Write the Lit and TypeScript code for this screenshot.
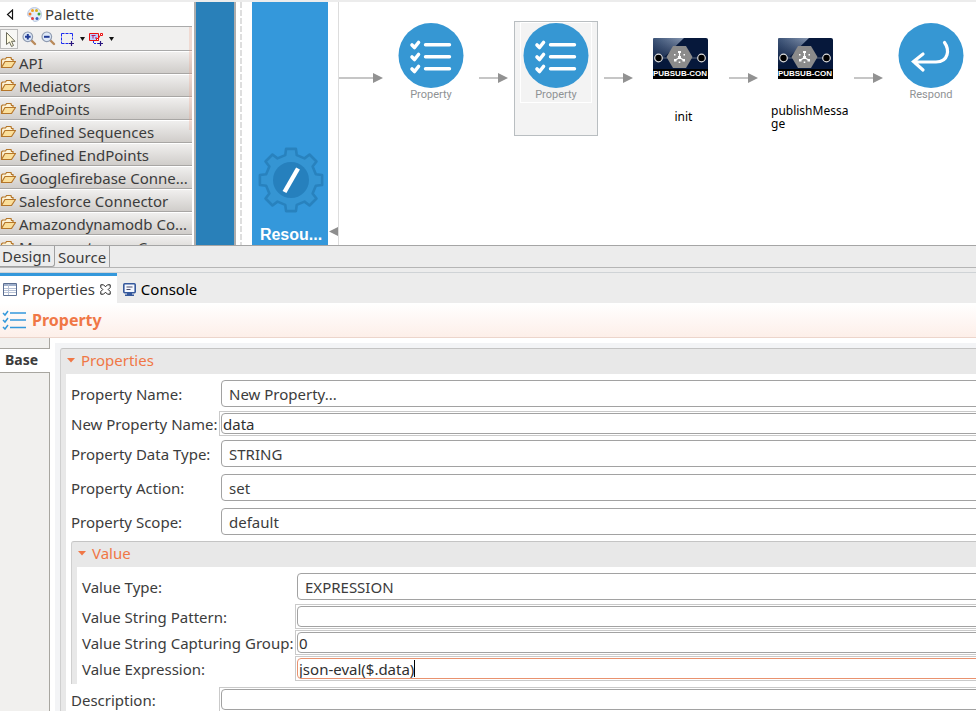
import { LitElement, html, svg, css, nothing } from "lit";
import { customElement, property } from "lit/decorators.js";
import { styleMap } from "lit/directives/style-map.js";

const UI = css`
  :host {
    font-family: "Noto Sans", "Open Sans", sans-serif;
    font-size: 15px;
    line-height: 20px;
    color: #3c3c3c;
  }
  * {
    box-sizing: border-box;
  }
  svg {
    display: block;
    flex: none;
  }
  button {
    font: inherit;
    color: inherit;
    background: none;
    border: 0;
    padding: 0;
    margin: 0;
    text-align: left;
  }
`;

const folderIcon = html`<svg width="16" height="13" viewBox="0 0 16 13">
  <path d="M1.500 11.500V4l1-1h3l1-1.500h4.500l.5 2h1.500v2" fill="#fdf3d6" stroke="#b5762a" stroke-width="1.200" />
  <path d="M1.500 11.500l3.500-6h10.500l-4 6z" fill="#fbdf9a" stroke="#b5762a" stroke-width="1.200" stroke-linejoin="round" />
</svg>`;

const zoomIcon = (plus: boolean) => html`<svg width="15" height="15" viewBox="0 0 15 15">
  <path d="M9 9l4 4" stroke="#b98a5a" stroke-width="2.400" stroke-linecap="round" />
  <circle cx="5.800" cy="5.800" r="4.800" fill="#dfe9f8" stroke="#8f9bb0" stroke-width="1.200" />
  <path d=${plus ? "M3 5.800h5.600M5.800 3v5.600" : "M3 5.800h5.600"} stroke="#223c96" stroke-width="2" />
</svg>`;

const checklist = svg`
  <g fill="none" stroke-linecap="round" stroke-linejoin="round">
    <path d="M14 22.500l2.500 2.500 4-5M14 34.500l2.500 2.500 4-5M14 46.500l2.500 2.500 4-5" stroke-width="3.600" />
    <path d="M27.500 22.300h24M27.500 34.300h24M27.500 46.300h24" stroke-width="3.400" />
  </g>`;

/* Palette drawer with its tool strip. */
@customElement("tool-palette")
class ToolPalette extends LitElement {
  static styles = [
    UI,
    css`
      :host {
        display: flex;
        flex-direction: column;
        position: relative;
        overflow: hidden;
        background: #fff;
      }
      .head {
        flex: none;
        display: flex;
        align-items: center;
        height: 25px;
        padding-left: 6px;
        border-bottom: 1px solid #aaa;
      }
      .head .dots {
        margin: 0 3px 0 13px;
      }
      .tools {
        flex: none;
        display: flex;
        align-items: center;
        height: 24px;
        background: #f1f0ef;
        border-bottom: 1px solid #aaa;
      }
      .pick {
        width: 18px;
        height: 20px;
        padding: 1px 0 0 4px;
        border: 1px solid #bbb;
        background: #f7f7f5;
      }
      .zoom,
      .menu {
        margin-left: 4px;
      }
      .drawer {
        flex: none;
        display: flex;
        align-items: center;
        gap: 3px;
        width: 100%;
        height: 23px;
        border-top: 1px solid #fff;
        border-bottom: 1px solid #a8a6a4;
        background: linear-gradient(#f0efee, #d0cdca);
      }
      .name {
        white-space: nowrap;
      }
      .glow {
        position: absolute;
        top: 25px;
        right: 0;
        width: 3px;
        height: 103px;
        background: rgba(240, 150, 125, 0.25);
      }
    `,
  ];

  drawers = [
    "API",
    "Mediators",
    "EndPoints",
    "Defined Sequences",
    "Defined EndPoints",
    "Googlefirebase Conne...",
    "Salesforce Connector",
    "Amazondynamodb Co...",
    "Measurestorage Conne...",
  ];

  render() {
    const down = html`<svg width="5" height="4" viewBox="0 0 5 4"><path d="M0 0h5L2.500 4z" fill="#111" /></svg>`;
    return html`
      <div class="head">
        <svg width="8" height="11" viewBox="0 0 8 11"><path d="M6.500 1v9L1.500 5.500z" fill="#fff" stroke="#111" stroke-width="1.200" /></svg>
        <svg class="dots" width="15" height="15" viewBox="0 0 15 15">
          <path d="M7.500.6a6.900 6.900 0 0 1 6.900 6.900c0 4-3 6.900-6.900 6.900-2 0-1-2-2.500-3.500S.6 10 .6 7.500A6.900 6.900 0 0 1 7.500.6z" fill="#e6edf8" stroke="#b3c3dd" />
          <circle cx="5.500" cy="3.500" r="1.500" fill="#f0a020" />
          <circle cx="9.500" cy="3.500" r="1.500" fill="#d8b018" />
          <circle cx="12" cy="7" r="1.500" fill="#3fa535" />
          <circle cx="3" cy="7" r="1.500" fill="#ef7d22" />
          <circle cx="5.500" cy="11.500" r="1.500" fill="#e04040" />
          <circle cx="10" cy="11.500" r="1.500" fill="#3a62c0" />
        </svg>
        <span>Palette</span>
      </div>
      <div class="tools">
        <button class="pick" aria-label="Select">
          <svg width="11" height="17" viewBox="0 0 11 17"><path d="M1.500 1.500v12l3-2.500 2 4.500 2-1-2-4.200h3.500z" fill="#fffbe0" stroke="#6b6b5a" /></svg>
        </button>
        <button class="zoom" aria-label="Zoom in">${zoomIcon(true)}</button>
        <button class="zoom" aria-label="Zoom out">${zoomIcon(false)}</button>
        <button class="menu" aria-label="Marquee">
          <svg width="16" height="16" viewBox="0 0 16 16">
            <path d="M1.500 2.500h11M1.500 12.500h7M1.500 2.500v10M12.500 2.500v6" fill="none" stroke="#1a2af0" stroke-dasharray="3 1" />
            <path d="M9 12.500h5M11.500 10v5" stroke="#2a1680" stroke-width="1.200" />
          </svg>
        </button>
        <button class="menu" aria-label="Marquee options">${down}</button>
        <button class="menu" aria-label="Connection">
          <svg width="16" height="16" viewBox="0 0 16 16">
            <path d="M.5 2.500h9v7h-9z" fill="#bcd0ff" stroke="#e81010" />
            <path d="M2.500 4.500h4M4 4.500v3M6 7h2" stroke="#c01060" fill="none" />
            <path d="M9 8l2.500-4" stroke="#e81010" />
            <path d="M11.500 2.500h2v2h-2zM7.500 7.500h2v2h-2z" stroke="#e81010" fill="#fff" />
            <path d="M4.500 10v2.500h4.500" stroke="#1a2af0" fill="none" stroke-dasharray="2 1" />
            <path d="M9 12.500h5M11.500 10v5" stroke="#2a1680" stroke-width="1.200" />
          </svg>
        </button>
        <button class="menu" aria-label="Connection options">${down}</button>
      </div>
      ${this.drawers.map((d) => html`<button class="drawer">${folderIcon}<span class="name">${d}</span></button>`)}
      <div class="glow"></div>
    `;
  }
}

interface MediatorNode {
  x: number;
  kind: "property" | "respond" | "pubsub";
  label: string;
  selected?: boolean;
}

/* Free canvas with the mediation sequence. */
@customElement("flow-canvas")
class FlowCanvas extends LitElement {
  static styles = [
    UI,
    css`
      :host {
        display: block;
        position: relative;
        overflow: hidden;
        background: #fff;
        border-left: 1px solid #ddd;
      }
      .node,
      .arrow {
        position: absolute;
      }
      .node {
        top: 19px;
        width: 84px;
        height: 115px;
        padding-top: 1px;
        display: flex;
        flex-direction: column;
        align-items: center;
        border: 1px solid transparent;
      }
      .node.selected {
        background: #f3f3f3;
        border-color: #b9bec1;
        padding-top: 0;
      }
      .card {
        display: flex;
        flex-direction: column;
        align-items: center;
        width: 72px;
      }
      .selected .card {
        border: 1px solid #fff;
      }
      .caption {
        font: 11px/14px Roboto, sans-serif;
        color: #8f9294;
      }
      .pubsub {
        padding-top: 15px;
      }
      .title {
        align-self: flex-start;
        margin: 25px 0 0 7px;
        width: 80px;
        font-size: 12px;
        line-height: 13px;
        color: #000;
        overflow-wrap: anywhere;
      }
      .title.short {
        align-self: center;
        margin-top: 31px;
        width: auto;
      }
      .arrow {
        top: 71px;
      }
    `,
  ];

  nodes: MediatorNode[] = [
    { x: 50, kind: "property", label: "Property" },
    { x: 175, kind: "property", label: "Property", selected: true },
    { x: 299, kind: "pubsub", label: "init" },
    { x: 424, kind: "pubsub", label: "publishMessage" },
    { x: 550, kind: "respond", label: "Respond" },
  ];

  arrows = [
    { x: 0, w: 44 },
    { x: 140, w: 29 },
    { x: 265, w: 29 },
    { x: 390, w: 29 },
    { x: 515, w: 29 },
  ];

  badge(kind: string) {
    return html`<svg width="66" height="65" viewBox="0 0.5 66 65">
      <circle cx="33" cy="33" r="32.500" fill="#3697d3" />
      ${kind === "property"
        ? svg`<g stroke="#fff">${checklist}</g>`
        : svg`<path d="M46.500 20c5 7 4.500 19-8.500 19.500H16M25 31.500L15.500 39l9.500 8.500" fill="none" stroke="#fff" stroke-width="3.200" stroke-linecap="round" />`}
    </svg>`;
  }

  connector() {
    return html`<svg width="55" height="41" viewBox="0 0 55 41">
      <defs>
        <linearGradient id="sheen" x1="0" y1="0" x2="1" y2="0">
          <stop offset="0" stop-color="#3d5478" /><stop offset="1" stop-color="#8797b0" />
        </linearGradient>
        <linearGradient id="fade" x1="0" y1="0" x2="0" y2="1">
          <stop offset="0" stop-color="#06183b" stop-opacity="0" /><stop offset="1" stop-color="#06183b" />
        </linearGradient>
      </defs>
      <rect width="55" height="41" rx="2" fill="#06183b" />
      <path d="M1 0h30L3 27H0V1z" fill="url(#sheen)" />
      <path d="M0 0h32L3 28H0z" fill="url(#fade)" />
      <path d="M5 20h44" stroke="#5b6880" />
      <path d="M20 8h13l6.500 11L33 30H20l-6.500-11z" fill="#8b8b8b" />
      <path d="M26.500 14v5.500M26.500 19.500l-4 2.500M26.500 19.500l4 2.500" fill="none" stroke="#fff" stroke-width="1.200" />
      <g fill="#fff">
        <path d="M25 13h3v2h-3zM21 21h2.500v2.500H21zM29.500 21H32v2.500h-2.500z" />
        <path d="M21 16h1.500v1.500H21zM30.500 16H32v1.500h-1.500zM25.700 23.500h1.600V25h-1.600zM25 18h3v3h-3z" />
      </g>
      <circle cx="5.500" cy="20" r="3.800" fill="#000" stroke="#ddd" stroke-width="1.200" />
      <circle cx="48.500" cy="20" r="3.800" fill="#000" stroke="#ddd" stroke-width="1.200" />
      <path d="M0 31h55v10H0z" fill="#000" />
      <text x="27" y="38" text-anchor="middle" font-family="Liberation Sans, sans-serif" font-weight="700" font-size="8" fill="#fff">PUBSUB-CON</text>
    </svg>`;
  }

  render() {
    return html`
      ${this.arrows.map(
        (a) => html`<svg class="arrow" style=${styleMap({ left: `${a.x}px` })} width=${a.w} height="10">
          <path d=${`M0 5H${a.w - 9}`} stroke="#c6c6c6" stroke-width="2" />
          <path d=${`M${a.w - 10} 0L${a.w} 5L${a.w - 10} 10z`} fill="#929292" />
        </svg>`
      )}
      ${this.nodes.map((n) =>
        n.kind === "pubsub"
          ? html`<div class="node" style=${styleMap({ left: `${n.x}px` })}>
              <div class="pubsub">${this.connector()}</div>
              <div class="title ${n.label.length < 8 ? "short" : ""}">${n.label}</div>
            </div>`
          : html`<div class="node ${n.selected ? "selected" : ""}" style=${styleMap({ left: `${n.x}px` })}>
              <div class="card">${this.badge(n.kind)}<span class="caption">${n.label}</span></div>
            </div>`
      )}
    `;
  }
}

/* Titled group with a twistie. */
@customElement("form-section")
class FormSection extends LitElement {
  static styles = [
    UI,
    css`
      :host {
        display: block;
        padding-left: 5px;
        background: #e8e8e8;
        border-top: 1px solid #c4c4c4;
        border-left: 1px solid #cfcfcf;
        border-radius: 3px 0 0 0;
      }
      .title {
        display: flex;
        align-items: center;
        gap: 6px;
        height: 25px;
        padding-bottom: 3px;
        color: #f07746;
      }
      .body {
        background: #fff;
        padding: 2px 0 3px 5px;
      }
    `,
  ];
  @property() heading = "";

  render() {
    return html`
      <button class="title">
        <svg width="9" height="5" viewBox="0 0 9 5"><path d="M1 0h8L5 4.500z" fill="#f07746" /></svg>${this.heading}
      </button>
      <div class="body"><slot></slot></div>
    `;
  }
}

interface Field {
  id: string;
  label: string;
  value: string;
  combo?: boolean;
  active?: boolean;
}

@customElement("app-root")
class AppRoot extends LitElement {
  static styles = [
    UI,
    css`
      :host {
        display: flex;
        flex-direction: column;
        height: 100vh;
        overflow: hidden;
        background: #ececec;
      }
      .editor {
        flex: none;
        display: flex;
        height: 243px;
        margin-top: 2px;
        background: #fff;
      }
      tool-palette {
        width: 192px;
        margin-right: 2px;
      }
      .rail {
        width: 42px;
        background: #2980b9;
        border: solid #adadad;
        border-width: 0 2px;
      }
      .guide {
        width: 2px;
        margin: 0 10px 0 4px;
        background: repeating-linear-gradient(#dedede 0 6px, #fff 6px 8px);
      }
      .resource {
        width: 76px;
        padding-left: 2px;
        display: flex;
        flex-direction: column;
        justify-content: flex-end;
        align-items: center;
        gap: 12px;
        background: #3498db;
        color: #fff;
        font: bold 16px/20px "Liberation Sans", sans-serif;
      }
      .handle {
        width: 10px;
        display: flex;
        align-items: flex-end;
        justify-content: flex-end;
        padding-bottom: 9px;
      }
      flow-canvas {
        flex: 1;
      }
      .pages {
        flex: none;
        display: flex;
        height: 23px;
        border-top: 1px solid #a5a5a5;
        border-bottom: 1px solid #b5b5b5;
      }
      .page {
        height: 21px;
        padding: 0 3px;
        border-right: 1px solid #a0a0a0;
      }
      .page.on {
        padding-left: 2px;
        border-bottom: 1px solid #a0a0a0;
        border-radius: 0 0 3px 0;
      }
      .views {
        flex: none;
        display: flex;
        height: 31px;
        margin-top: 4px;
        border-top: 1px solid #cfd3d6;
      }
      .view {
        display: flex;
        align-items: center;
        gap: 5px;
        padding: 2px 6px 0;
        color: #000;
      }
      .view.on {
        padding: 0 6px 1px 3px;
        color: #3c3c3c;
        background: #fff;
        border-top: 3px solid #3498db;
      }
      .heading {
        flex: none;
        display: flex;
        align-items: center;
        gap: 5px;
        height: 35px;
        margin: 0;
        padding-left: 2px;
        font-size: 16px;
        color: #f07746;
        background: linear-gradient(#fff, #fdefe9);
        border-bottom: 1px solid #ecd5cb;
      }
      .sheet {
        flex: 1;
        min-height: 0;
        display: flex;
        overflow: hidden;
        background: #fff;
      }
      .side {
        flex: none;
        width: 50px;
        display: flex;
        flex-direction: column;
      }
      .cap,
      .rest {
        background: #f1f0ee;
        border-right: 1px solid #a8a6a0;
      }
      .cap {
        height: 11px;
        border-bottom: 1px solid #a8a6a0;
      }
      .rest {
        flex: 1;
        border-top: 1px solid #a8a6a0;
      }
      .tab {
        height: 23px;
        padding: 0 0 2px 5px;
        font-size: 14px;
        font-weight: 700;
      }
      .form {
        flex: 1;
        margin: 5px -24px 0 5px;
        padding: 5px 0 0 5px;
        background: #f3f4f6;
      }
      .row {
        display: grid;
        grid-template-columns: 148px 1fr;
        align-items: center;
        padding-top: 1px;
      }
      .row.combo {
        padding: 4px 0 3px;
      }
      .inner .row {
        grid-template-columns: 213px 1fr;
      }
      .inner {
        margin: 3px 0 2px;
      }
      label {
        white-space: nowrap;
      }
      select {
        appearance: none;
        height: 27px;
        margin: 0 0 0 2px;
        padding: 0 7px;
        font: inherit;
        color: #3c3c3c;
        background: #fff;
        border: 1px solid #a2a2a2;
        border-radius: 4px;
      }
      .frame {
        height: 25px;
        padding: 1px;
        border: 1px solid #cacaca;
      }
      .box {
        display: flex;
        align-items: center;
        height: 21px;
        padding-left: 1px;
        background: #fff;
        border: 1px solid #a2a2a2;
        border-radius: 4px;
        overflow: hidden;
      }
      .active .box {
        border-color: #e9926f;
      }
      input {
        width: 100%;
        height: 19px;
        padding: 0;
        font: inherit;
        color: #303030;
        background: none;
        border: 0;
        outline: 0;
      }
      .active input {
        width: auto;
        field-sizing: content;
      }
      .caret {
        width: 1px;
        height: 17px;
        background: #000;
      }
    `,
  ];

  main: Field[] = [
    { id: "name", label: "Property Name:", value: "New Property...", combo: true },
    { id: "new-name", label: "New Property Name:", value: "data" },
    { id: "type", label: "Property Data Type:", value: "STRING", combo: true },
    { id: "action", label: "Property Action:", value: "set", combo: true },
    { id: "scope", label: "Property Scope:", value: "default", combo: true },
  ];

  values: Field[] = [
    { id: "value-type", label: "Value Type:", value: "EXPRESSION", combo: true },
    { id: "pattern", label: "Value String Pattern:", value: "" },
    { id: "group", label: "Value String Capturing Group:", value: "0" },
    { id: "expression", label: "Value Expression:", value: "json-eval($.data)", active: true },
  ];

  field(f: Field) {
    return html`<div class="row ${f.combo ? "combo" : ""}">
      <label for=${f.id}>${f.label}</label>
      ${f.combo
        ? html`<select id=${f.id}><option>${f.value}</option></select>`
        : html`<div class="frame ${f.active ? "active" : ""}">
            <div class="box">
              <input id=${f.id} type="text" .value=${f.value} />${f.active ? html`<span class="caret"></span>` : nothing}
            </div>
          </div>`}
    </div>`;
  }

  gear() {
    const at = (deg: number, r: number) => {
      const a = (deg * Math.PI) / 180;
      return `${(33 + r * Math.sin(a)).toFixed(2)} ${(33 - r * Math.cos(a)).toFixed(2)}`;
    };
    const pts: string[] = [];
    for (let i = 0; i < 8; i++) {
      const c = i * 45;
      pts.push(at(c - 13, 25.5), at(c - 9, 31.5), at(c + 9, 31.5), at(c + 13, 25.5));
    }
    return html`<svg width="66" height="66" viewBox="0 0 66 66">
      <path d=${`M${pts.join("L")}Z`} fill="#3595d3" stroke="#2882be" stroke-width="2.600" stroke-linejoin="round" />
      <circle cx="33" cy="33" r="18" fill="#2680bd" />
      <path d="M26.500 45L40 21.500" stroke="#fff" stroke-width="4.400" />
    </svg>`;
  }

  render() {
    return html`
      <div class="editor">
        <tool-palette></tool-palette>
        <div class="rail"></div>
        <div class="guide"></div>
        <div class="resource">${this.gear()}<span>Resou...</span></div>
        <div class="handle"><svg width="9" height="9" viewBox="0 0 9 9"><path d="M9 0v9L0 4.500z" fill="#8e8e8e" /></svg></div>
        <flow-canvas></flow-canvas>
      </div>
      <nav class="pages">
        <button class="page on">Design</button>
        <button class="page">Source</button>
      </nav>
      <nav class="views">
        <button class="view on">
          <svg width="14" height="13" viewBox="0 0 14 13">
            <path d="M.5.5h13v12H.5z" fill="#fff" stroke="#5c6f92" /><path d="M1 1h12v2H1z" fill="#9fb0cc" />
            <path d="M5.500 1v11M1 5.500h12M1 7.500h12M1 9.500h12" stroke="#b6c1d6" />
          </svg>
          Properties
          <svg width="11" height="11" viewBox="0 0 11 11">
            <path d="M.8.8h2.700l2 2 2-2h2.700v2.700l-2 2 2 2v2.700H7.500l-2-2-2 2H.8V7.500l2-2-2-2z" fill="#fff" stroke="#222" />
          </svg>
        </button>
        <button class="view">
          <svg width="13" height="13" viewBox="0 0 13 13">
            <rect x=".8" y=".8" width="11.400" height="9" rx="1" fill="#f4f8ff" stroke="#35589c" stroke-width="1.600" />
            <path d="M3.500 4h6M3.500 6.500h4" stroke="#4a4a6a" /><path d="M4 10h5v1.500h2V13H2v-1.500h2z" fill="#35589c" />
          </svg>
          Console
        </button>
      </nav>
      <h1 class="heading">
        <svg width="25" height="20" viewBox="0 0 25 20">
          <path d="M1 3l2 2 3-4M1 10l2 2 3-4M1 17l2 2 3-4" fill="none" stroke="#3498db" stroke-width="1.500" />
          <path d="M8 3h16M8 10h16M8 17.500h16" stroke="#3498db" stroke-width="1.500" />
        </svg>
        Property
      </h1>
      <div class="sheet">
        <div class="side">
          <div class="cap"></div>
          <button class="tab">Base</button>
          <div class="rest"></div>
        </div>
        <div class="form">
          <form-section heading="Properties">
            ${this.main.map((f) => this.field(f))}
            <form-section class="inner" heading="Value">${this.values.map((f) => this.field(f))}</form-section>
            ${this.field({ id: "description", label: "Description:", value: "" })}
          </form-section>
        </div>
      </div>
    `;
  }
}
